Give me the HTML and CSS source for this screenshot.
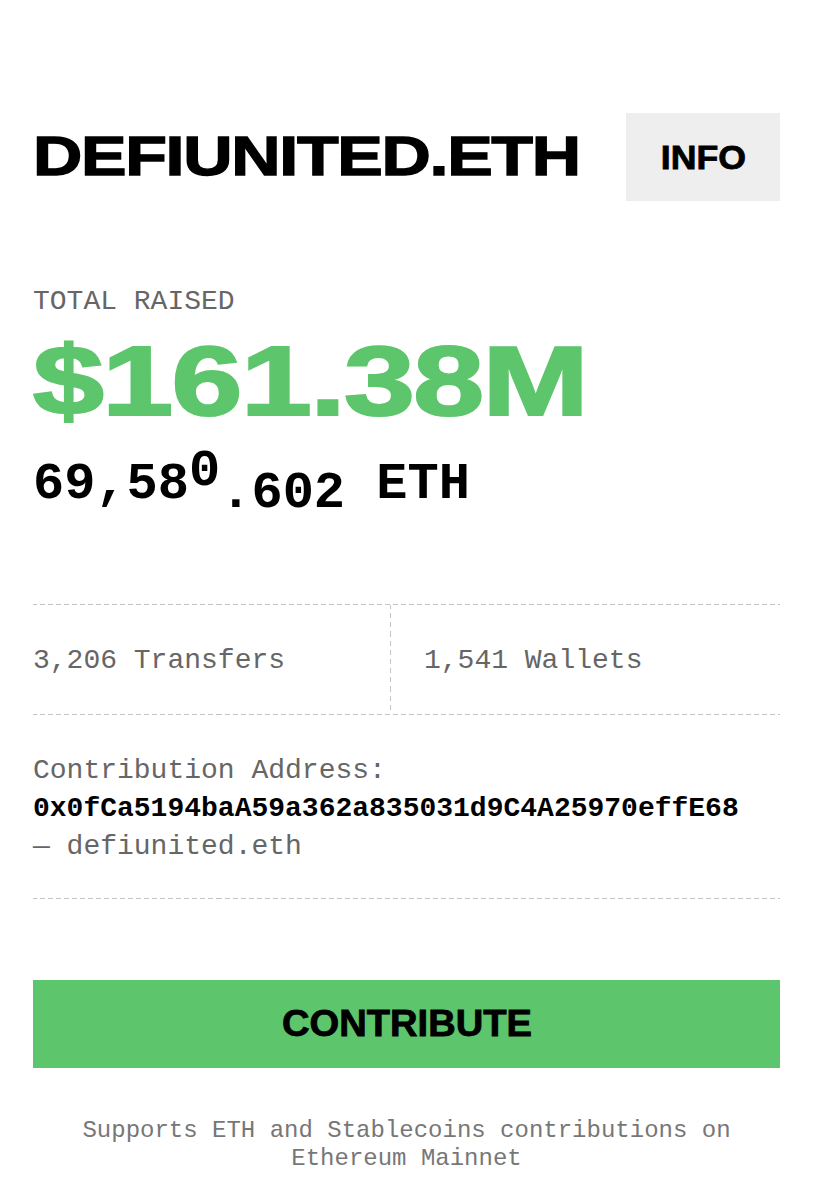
FILE: index.html
```html
<!DOCTYPE html>
<html lang="en">
<head>
<meta charset="utf-8">
<title>DEFIUNITED.ETH</title>
<link rel="stylesheet" href="styles.css">
</head>
<body>
<main class="page">
  <header class="header">
    <h1 class="title"><span class="wide wide-title">DEFIUNITED.ETH</span></h1>
    <button class="info-btn"><span class="wide wide-info">INFO</span></button>
  </header>

  <section class="raised">
    <div class="label">TOTAL RAISED</div>
    <div class="usd"><span class="wide wide-usd">$161.38M</span></div>
    <div class="eth">69,58<span class="roll-up">0</span><span class="roll-down">.602</span> ETH</div>
  </section>

  <section class="stats">
    <div class="stat">3,206 Transfers</div>
    <div class="stat stat-right">1,541 Wallets</div>
  </section>

  <section class="address">
    <div class="addr-label">Contribution Address:</div>
    <div class="addr-value">0x0fCa5194baA59a362a835031d9C4A25970effE68</div>
    <div class="addr-ens">— defiunited.eth</div>
  </section>

  <button class="contribute"><span class="wide wide-cta">CONTRIBUTE</span></button>

  <p class="note">Supports ETH and Stablecoins contributions on Ethereum Mainnet</p>
</main>
</body>
</html>
```

FILE: styles.css
```css
* { box-sizing: border-box; }

body {
  margin: 0;
  background: #fff;
  color: #000;
  font-family: "Liberation Mono", "DejaVu Sans Mono", monospace;
}

.page {
  padding: 113px 33px 0 33px;
}

.wide {
  display: inline-block;
  font-family: "Liberation Sans", Arial, sans-serif;
  font-weight: 700;
  transform-origin: left center;
}

.header {
  display: flex;
  justify-content: space-between;
  align-items: center;
  height: 88px;
}

.title {
  margin: 0;
  font-size: 56px;
  line-height: 1;
  font-weight: 700;
  padding-top: 2px;
}

.wide-title {
  transform: scaleX(1.22);
  letter-spacing: -1.1px;
  -webkit-text-stroke: 1.3px #000;
}

.info-btn {
  width: 154px;
  height: 88px;
  border: 0;
  background: #eeeeee;
  padding: 0;
  display: flex;
  align-items: center;
  justify-content: center;
  font-size: 33px;
  line-height: 1;
  color: #000;
}

.wide-info {
  transform: scaleX(1.08);
  transform-origin: center;
  -webkit-text-stroke: 0.8px #000;
}

.raised {
  padding-top: 84px;
}

.label {
  font-size: 28px;
  line-height: 33.6px;
  color: #666;
}

.usd {
  margin-top: 13px;
  height: 98px;
  font-size: 98px;
  line-height: 1;
  color: #5dc56c;
  white-space: nowrap;
}

.wide-usd {
  transform: scaleX(1.3);
  letter-spacing: -1.2px;
  -webkit-text-stroke: 2.2px #5dc56c;
}

.eth {
  margin-top: 24px;
  font-size: 52px;
  line-height: 62px;
  font-weight: 700;
  white-space: pre;
}

.roll-up {
  display: inline-block;
  transform: translateY(-13px);
}

.roll-down {
  display: inline-block;
  transform: translateY(9px);
}

.stats {
  margin-top: 88px;
  display: grid;
  grid-template-columns: 357px 1fr;
  height: 111px;
  border-top: 1px solid transparent;
  border-bottom: 1px solid transparent;
  border-image: repeating-linear-gradient(90deg, #c4c4c4 0 5px, transparent 5px 8px) 1;
}

.stat {
  display: flex;
  align-items: center;
  font-size: 28px;
  color: #666;
  padding-top: 2px;
}

.stat-right {
  border-left: 1px solid transparent;
  border-image: repeating-linear-gradient(180deg, #c4c4c4 0 5px, transparent 5px 9px) 1;
  padding-left: 33px;
}

.address {
  padding-top: 37px;
  padding-bottom: 32px;
  border-bottom: 1px solid transparent;
  border-image: repeating-linear-gradient(90deg, #c4c4c4 0 5px, transparent 5px 8px) 1;
  font-size: 28px;
  line-height: 38px;
}

.addr-label,
.addr-ens {
  color: #666;
}

.addr-value {
  font-weight: 700;
  color: #000;
}

.contribute {
  display: flex;
  align-items: center;
  justify-content: center;
  width: 100%;
  height: 88px;
  margin-top: 81px;
  border: 0;
  padding: 0;
  background: #5dc56c;
  color: #000;
  font-size: 36px;
  line-height: 1;
}

.wide-cta {
  transform: scaleX(1.06);
  transform-origin: center;
  -webkit-text-stroke: 0.8px #000;
}

.note {
  margin: 49px 0 0 0;
  text-align: center;
  font-size: 24px;
  line-height: 28px;
  color: #777;
  padding: 0 40px;
}
```
